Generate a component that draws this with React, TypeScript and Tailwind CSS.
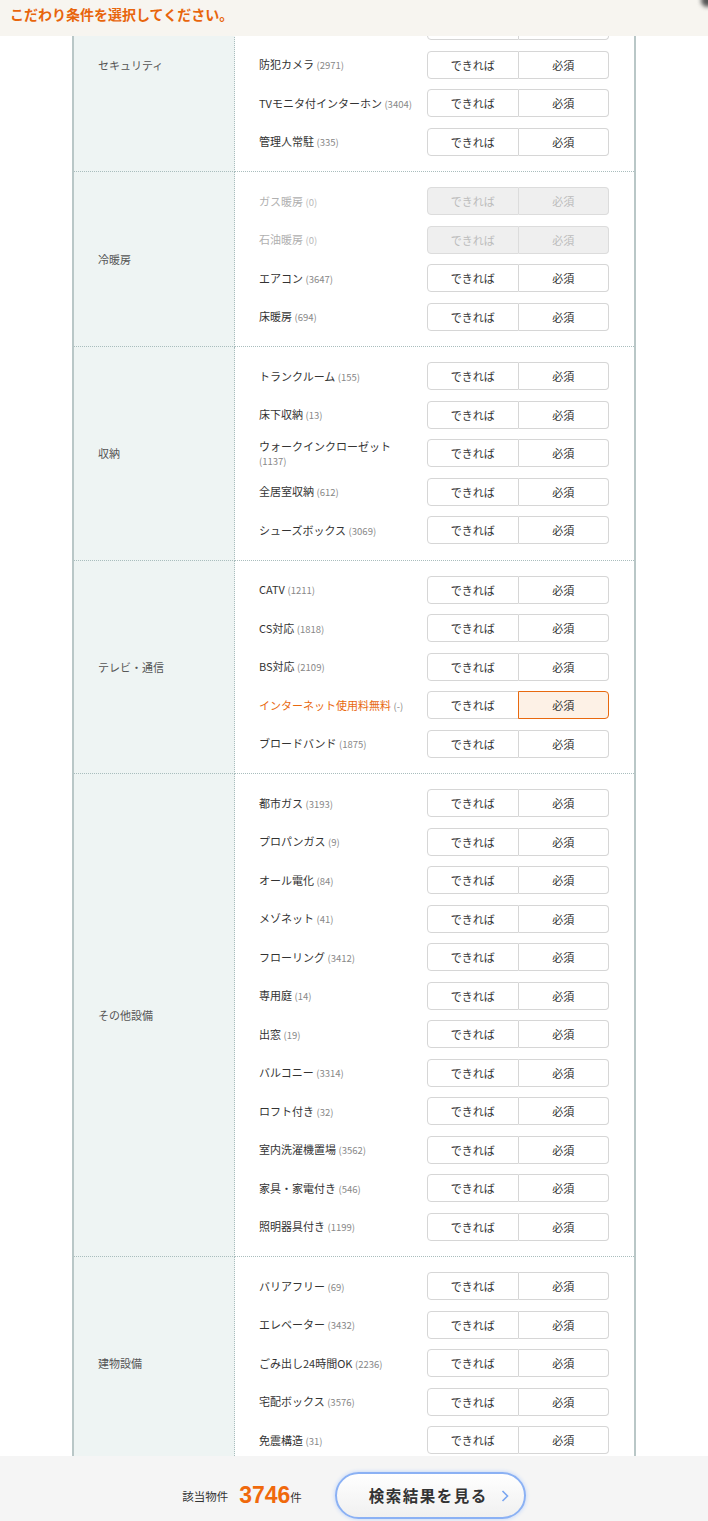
import React from 'react';

type Item = {
  name: string;
  count: string;
  disabled?: boolean;
  selected?: 'maybe' | 'must';
  wrap?: boolean;
};

type Section = {
  title: string;
  items: Item[];
};

const sections: Section[] = [
  {
    title: 'セキュリティ',
    items: [
      { name: 'オートロック', count: '3102' },
      { name: 'モニタ付オートロック', count: '2788' },
      { name: '防犯カメラ', count: '2971' },
      { name: 'TVモニタ付インターホン', count: '3404' },
      { name: '管理人常駐', count: '335' },
    ],
  },
  {
    title: '冷暖房',
    items: [
      { name: 'ガス暖房', count: '0', disabled: true },
      { name: '石油暖房', count: '0', disabled: true },
      { name: 'エアコン', count: '3647' },
      { name: '床暖房', count: '694' },
    ],
  },
  {
    title: '収納',
    items: [
      { name: 'トランクルーム', count: '155' },
      { name: '床下収納', count: '13' },
      { name: 'ウォークインクローゼット', count: '1137', wrap: true },
      { name: '全居室収納', count: '612' },
      { name: 'シューズボックス', count: '3069' },
    ],
  },
  {
    title: 'テレビ・通信',
    items: [
      { name: 'CATV', count: '1211' },
      { name: 'CS対応', count: '1818' },
      { name: 'BS対応', count: '2109' },
      { name: 'インターネット使用料無料', count: '-', selected: 'must' },
      { name: 'ブロードバンド', count: '1875' },
    ],
  },
  {
    title: 'その他設備',
    items: [
      { name: '都市ガス', count: '3193' },
      { name: 'プロパンガス', count: '9' },
      { name: 'オール電化', count: '84' },
      { name: 'メゾネット', count: '41' },
      { name: 'フローリング', count: '3412' },
      { name: '専用庭', count: '14' },
      { name: '出窓', count: '19' },
      { name: 'バルコニー', count: '3314' },
      { name: 'ロフト付き', count: '32' },
      { name: '室内洗濯機置場', count: '3562' },
      { name: '家具・家電付き', count: '546' },
      { name: '照明器具付き', count: '1199' },
    ],
  },
  {
    title: '建物設備',
    items: [
      { name: 'バリアフリー', count: '69' },
      { name: 'エレベーター', count: '3432' },
      { name: 'ごみ出し24時間OK', count: '2236' },
      { name: '宅配ボックス', count: '3576' },
      { name: '免震構造', count: '31' },
    ],
  },
];

const Toggle: React.FC<{ item: Item }> = ({ item }) => {
  if (item.disabled) {
    return (
      <div className="flex w-[182px] h-[28px] shrink-0 text-[11px] text-[#bcbcbc]">
        <div className="flex-1 flex items-center justify-center bg-[#efefef] border border-[#dcdcdc] rounded-l-[4px]">
          できれば
        </div>
        <div className="flex-1 flex items-center justify-center bg-[#efefef] border border-l-0 border-[#dcdcdc] rounded-r-[4px]">
          必須
        </div>
      </div>
    );
  }
  const must = item.selected === 'must';
  return (
    <div className="flex w-[182px] h-[28px] shrink-0 text-[11px] text-[#333]">
      <div className="flex-1 flex items-center justify-center bg-white border border-[#d6d6d6] rounded-l-[4px]">
        できれば
      </div>
      {must ? (
        <div className="flex-1 flex items-center justify-center bg-[#fdf1e6] border border-[#e8690f] -ml-px rounded-r-[4px]">
          必須
        </div>
      ) : (
        <div className="flex-1 flex items-center justify-center bg-white border border-l-0 border-[#d6d6d6] rounded-r-[4px]">
          必須
        </div>
      )}
    </div>
  );
};

const Row: React.FC<{ item: Item }> = ({ item }) => {
  const nameColor = item.disabled
    ? 'text-[#b0b0b0]'
    : item.selected
      ? 'text-[#e8690f]'
      : 'text-[#333]';
  return (
    <div className="h-[38.5px] flex items-center pl-[24px] pr-[25px]">
      <div className={`flex-1 text-[11px] leading-[14px] whitespace-nowrap ${nameColor}`}>
        {item.name}
        {item.wrap ? <br /> : ' '}
        <span className={`text-[9.5px] ${item.disabled ? 'text-[#b8b8b8]' : 'text-[#888]'}`}>
          ({item.count})
        </span>
      </div>
      <Toggle item={item} />
    </div>
  );
};

export default function App() {
  return (
    <div className="min-h-screen bg-white font-['Noto_Sans_CJK_JP','Liberation_Sans',sans-serif]">
      {/* fixed title */}
      <div className="fixed top-0 left-0 right-0 z-10 h-[36px] bg-[#f7f5f0] px-[10px] pt-[5px]">
        <p className="text-[14px] font-bold text-[#e8650c] leading-[18px]">
          こだわり条件を選択してください。
        </p>
        <div className="absolute -right-[6px] -top-[6px] w-[13px] h-[13px] rounded-full bg-[#555] blur-[2px]" />
      </div>

      {/* conditions table */}
      <div className="-mt-[41.5px] w-[564px] mx-auto border-x-2 border-[#b9c7c7] pb-[80px]">
        {sections.map((s, i) => {
          const last = i === sections.length - 1;
          const bottom = last ? '' : 'border-b border-dotted border-b-[#a9bdbd]';
          return (
            <div key={s.title} className="flex">
              <div
                className={`w-[161px] shrink-0 bg-[#eef4f3] border-r border-dotted border-r-[#a9bdbd] flex items-center pl-[24px] text-[11px] text-[#555] ${bottom}`}
              >
                {s.title}
              </div>
              <div className={`flex-1 py-[10px] ${bottom}`}>
                {s.items.map((it) => (
                  <Row key={it.name} item={it} />
                ))}
              </div>
            </div>
          );
        })}
      </div>

      {/* result bar */}
      <div className="fixed bottom-0 left-0 right-0 z-10 h-[65px] bg-[#f5f5f5] flex items-center justify-center pt-[14px]">
        <span className="text-[11.5px] text-[#333] mt-[3px]">該当物件</span>
        <span className="ml-[11px] text-[23px] font-bold text-[#f0690c] font-['Liberation_Sans',sans-serif] leading-none">
          3746
        </span>
        <span className="text-[11.5px] text-[#333] mt-[4px]">件</span>
        <button className="ml-[33px] w-[191px] h-[47px] rounded-full border-2 border-[#8bb1f4] shadow-[0_0_4px_#b9d1fb] bg-gradient-to-b from-white to-[#f0f0f0] flex items-center justify-center relative">
          <span className="text-[15.5px] font-bold text-[#333] tracking-[1.5px] -ml-[4px]">検索結果を見る</span>
          <svg className="absolute right-[15px] top-1/2 -translate-y-1/2" width="8" height="13" viewBox="0 0 8 13">
            <polyline points="1.5,1.5 6.5,6.5 1.5,11.5" fill="none" stroke="#79a5f0" strokeWidth="1.6" />
          </svg>
        </button>
      </div>
    </div>
  );
}
